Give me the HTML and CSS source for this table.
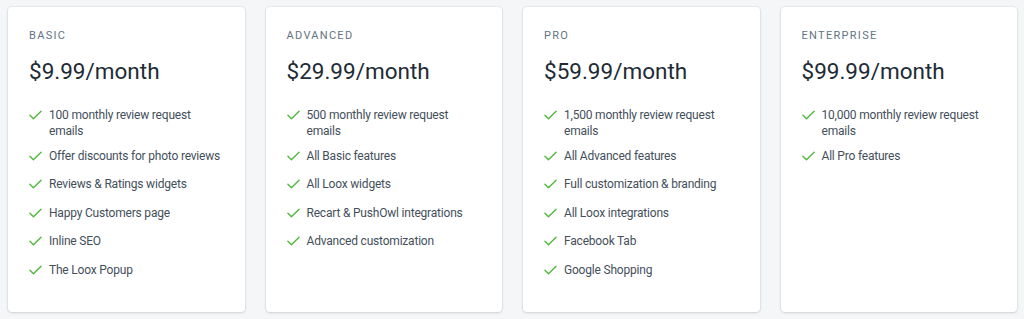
FILE: index.html
```html
<!DOCTYPE html>
<html>
<head>
<meta charset="utf-8">
<link rel="stylesheet" href="styles.css">
</head>
<body>
<div class="plans">
  <div class="card">
    <div class="name">BASIC</div>
    <div class="price">$9.99/month</div>
    <ul class="features">
      <li><svg class="check" viewBox="0 0 14 10"><path d="M1 5.2 L4.8 9 L13 1"/></svg><span>100 monthly review request emails</span></li>
      <li><svg class="check" viewBox="0 0 14 10"><path d="M1 5.2 L4.8 9 L13 1"/></svg><span>Offer discounts for photo reviews</span></li>
      <li><svg class="check" viewBox="0 0 14 10"><path d="M1 5.2 L4.8 9 L13 1"/></svg><span>Reviews &amp; Ratings widgets</span></li>
      <li><svg class="check" viewBox="0 0 14 10"><path d="M1 5.2 L4.8 9 L13 1"/></svg><span>Happy Customers page</span></li>
      <li><svg class="check" viewBox="0 0 14 10"><path d="M1 5.2 L4.8 9 L13 1"/></svg><span>Inline SEO</span></li>
      <li><svg class="check" viewBox="0 0 14 10"><path d="M1 5.2 L4.8 9 L13 1"/></svg><span>The Loox Popup</span></li>
    </ul>
  </div>
  <div class="card">
    <div class="name">ADVANCED</div>
    <div class="price">$29.99/month</div>
    <ul class="features">
      <li><svg class="check" viewBox="0 0 14 10"><path d="M1 5.2 L4.8 9 L13 1"/></svg><span>500 monthly review request emails</span></li>
      <li><svg class="check" viewBox="0 0 14 10"><path d="M1 5.2 L4.8 9 L13 1"/></svg><span>All Basic features</span></li>
      <li><svg class="check" viewBox="0 0 14 10"><path d="M1 5.2 L4.8 9 L13 1"/></svg><span>All Loox widgets</span></li>
      <li><svg class="check" viewBox="0 0 14 10"><path d="M1 5.2 L4.8 9 L13 1"/></svg><span>Recart &amp; PushOwl integrations</span></li>
      <li><svg class="check" viewBox="0 0 14 10"><path d="M1 5.2 L4.8 9 L13 1"/></svg><span>Advanced customization</span></li>
    </ul>
  </div>
  <div class="card">
    <div class="name">PRO</div>
    <div class="price">$59.99/month</div>
    <ul class="features">
      <li><svg class="check" viewBox="0 0 14 10"><path d="M1 5.2 L4.8 9 L13 1"/></svg><span>1,500 monthly review request emails</span></li>
      <li><svg class="check" viewBox="0 0 14 10"><path d="M1 5.2 L4.8 9 L13 1"/></svg><span>All Advanced features</span></li>
      <li><svg class="check" viewBox="0 0 14 10"><path d="M1 5.2 L4.8 9 L13 1"/></svg><span>Full customization &amp; branding</span></li>
      <li><svg class="check" viewBox="0 0 14 10"><path d="M1 5.2 L4.8 9 L13 1"/></svg><span>All Loox integrations</span></li>
      <li><svg class="check" viewBox="0 0 14 10"><path d="M1 5.2 L4.8 9 L13 1"/></svg><span>Facebook Tab</span></li>
      <li><svg class="check" viewBox="0 0 14 10"><path d="M1 5.2 L4.8 9 L13 1"/></svg><span>Google Shopping</span></li>
    </ul>
  </div>
  <div class="card">
    <div class="name">ENTERPRISE</div>
    <div class="price">$99.99/month</div>
    <ul class="features">
      <li><svg class="check" viewBox="0 0 14 10"><path d="M1 5.2 L4.8 9 L13 1"/></svg><span>10,000 monthly review request emails</span></li>
      <li><svg class="check" viewBox="0 0 14 10"><path d="M1 5.2 L4.8 9 L13 1"/></svg><span>All Pro features</span></li>
    </ul>
  </div>
</div>
</body>
</html>
```
FILE: styles.css
```css
html, body {
  margin: 0;
  padding: 0;
  background: #f4f6f8;
  font-family: "Roboto", "Noto Sans", sans-serif;
}
.plans {
  display: grid;
  grid-template-columns: repeat(4, 1fr);
  gap: 21px;
  padding: 7px 7px 7px 8px;
  height: 319px;
  box-sizing: border-box;
}
.card {
  background: #fff;
  border-radius: 4px;
  box-shadow: 0 0 0 1px rgba(63,63,68,0.05), 0 1px 3px 0 rgba(63,63,68,0.15);
  padding: 22px 22px 20px 21px;
  height: 305px;
  box-sizing: border-box;
}
.name {
  font-size: 11px;
  letter-spacing: 1.3px;
  color: #637381;
  line-height: 14px;
}
.price {
  font-size: 22.5px;
  color: #212b36;
  margin-top: 14px;
  line-height: 28px;
}
.features {
  list-style: none;
  margin: 22px 0 0;
  padding: 0;
}
.features li {
  display: flex;
  align-items: flex-start;
  min-height: 20px;
  font-size: 12px;
  letter-spacing: -0.2px;
  line-height: 16px;
  color: #454f5b;
  margin-bottom: 8.5px;
}
.check {
  width: 13px;
  height: 10px;
  flex: none;
  margin: 3px 7px 0 0;
  fill: none;
  stroke: #50b83c;
  stroke-width: 1.5;
  stroke-linecap: round;
  stroke-linejoin: round;
}
```
